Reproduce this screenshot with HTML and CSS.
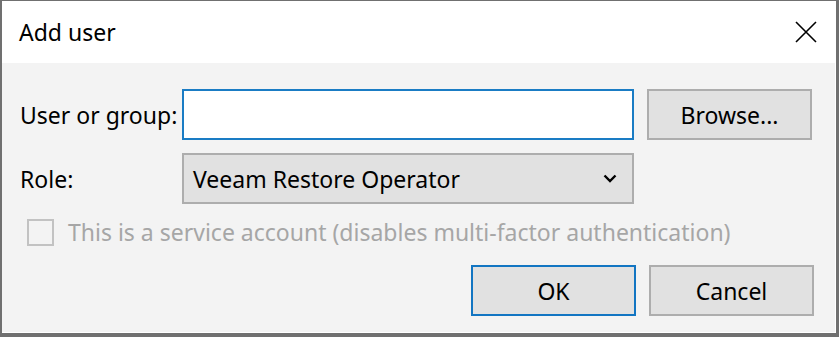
FILE: index.html
```html
<!DOCTYPE html>
<html lang="en">
<head>
    <meta charset="UTF-8">
    <title>Add user</title>
    <link rel="stylesheet" href="styles.css">
</head>
<body>

    <div class="dialog">
        <div class="titlebar">
            <span class="title">Add user</span>
            <svg class="close" width="22" height="22" viewBox="0 0 22 22">
                <path d="M1 1 L21 21 M21 1 L1 21" stroke="#000" stroke-width="1.6" fill="none"/>
            </svg>
        </div>

        <div class="content">
            <div class="form">
                <label class="label">User or group:</label>
                <div class="input"></div>
                <button class="btn">Browse...</button>

                <label class="label">Role:</label>
                <div class="select">
                    <span>Veeam Restore Operator</span>
                    <svg class="chevron" width="14" height="9" viewBox="0 0 14 9">
                        <path d="M1.5 1.5 L7 7 L12.5 1.5" stroke="#000" stroke-width="2.4" fill="none"/>
                    </svg>
                </div>
            </div>

            <div class="check-row">
                <span class="checkbox"></span>
                <span class="check-text">This is a service account (disables multi-factor authentication)</span>
            </div>

            <div class="actions">
                <button class="btn btn-default">OK</button>
                <button class="btn">Cancel</button>
            </div>
        </div>
    </div>

</body>
</html>
```

FILE: styles.css
```css
body {
    margin: 0;
    padding: 0;
    font-family: "Noto Sans", "Open Sans", sans-serif;
    background-color: #ffffff;
}
.dialog {
    width: 834px;
    height: 332px;
    border-style: solid;
    border-color: #707070;
    border-width: 1px 3px 4px 2px;
    display: flex;
    flex-direction: column;
    background-color: #ffffff;
}
.titlebar {
    height: 62px;
    display: flex;
    align-items: center;
    justify-content: space-between;
    padding: 0 19px 0 17px;
}
.title {
    font-size: 23px;
    color: #000;
}
.content {
    flex: 1;
    background-color: #f3f3f3;
    margin: 0 1px 1px 0;
    padding: 26px 0 0 18px;
}
.form {
    display: grid;
    grid-template-columns: 149px 452px 165px;
    grid-auto-rows: 51px;
    column-gap: 13px;
    row-gap: 13px;
    align-items: center;
}
.label {
    font-size: 23px;
    color: #000;
    white-space: nowrap;
}
.input {
    height: 100%;
    box-sizing: border-box;
    background-color: #fff;
    border: 2px solid #1a7cc4;
}
.btn {
    height: 51px;
    box-sizing: border-box;
    background-color: #e1e1e1;
    border: 2px solid #adadad;
    font-family: inherit;
    font-size: 23px;
    color: #000;
    padding: 0;
}
.btn-default {
    border-color: #1275c2;
}
.select {
    height: 100%;
    box-sizing: border-box;
    background-color: #e1e1e1;
    border: 2px solid #adadad;
    display: flex;
    align-items: center;
    justify-content: space-between;
    padding: 0 15px 0 9px;
    font-size: 23px;
    color: #000;
}
.check-row {
    display: flex;
    align-items: center;
    gap: 14px;
    height: 27px;
    margin-top: 15px;
    padding-left: 7px;
}
.checkbox {
    width: 27px;
    height: 27px;
    box-sizing: border-box;
    border: 2px solid #c2c2c2;
}
.check-text {
    font-size: 23px;
    line-height: 27px;
    color: #a6a6a6;
    white-space: nowrap;
}
.actions {
    display: flex;
    justify-content: flex-end;
    gap: 13px;
    margin-top: 19px;
    padding-right: 21px;
}
.actions .btn {
    width: 165px;
}
```
